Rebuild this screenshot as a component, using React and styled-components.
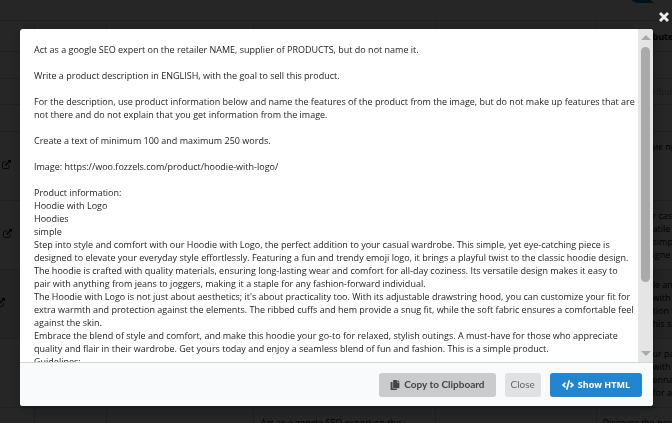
import React, { useState } from 'react';
import styled, { createGlobalStyle } from 'styled-components';
import { FaCode, FaCopy } from 'react-icons/fa';

const prompt = `Act as a google SEO expert on the retailer NAME, supplier of PRODUCTS, but do not name it.

Write a product description in ENGLISH, with the goal to sell this product.

For the description, use product information below and name the features of the product from the image, but do not make up features that are not there and do not explain that you get information from the image.

Create a text of minimum 100 and maximum 250 words.

Image: https://woo.fozzels.com/product/hoodie-with-logo/

Product information:
Hoodie with Logo
Hoodies
simple
Step into style and comfort with our Hoodie with Logo, the perfect addition to your casual wardrobe. This simple, yet eye-catching piece is designed to elevate your everyday style effortlessly. Featuring a fun and trendy emoji logo, it brings a playful twist to the classic hoodie design.
The hoodie is crafted with quality materials, ensuring long-lasting wear and comfort for all-day coziness. Its versatile design makes it easy to pair with anything from jeans to joggers, making it a staple for any fashion-forward individual.
The Hoodie with Logo is not just about aesthetics; it's about practicality too. With its adjustable drawstring hood, you can customize your fit for extra warmth and protection against the elements. The ribbed cuffs and hem provide a snug fit, while the soft fabric ensures a comfortable feel against the skin.
Embrace the blend of style and comfort, and make this hoodie your go-to for relaxed, stylish outings. A must-have for those who appreciate quality and flair in their wardrobe. Get yours today and enjoy a seamless blend of fun and fashion. This is a simple product.
Guidelines:`;

const rows = [
	{ link: 2, text: 'ик пр' },
	{ link: 3, text: 'r cas\natile\nsimp\nigne' },
	{ link: -4, shade: true, text: 'le an\nwith\ntion t\nhis si' },
	{ text: 'ur pa\nwith c\nenna\nfor a' },
	{ wide: true, prompt: 'Act as a google SEO expert on the', text: 'Discover the perf' },
];

function LinkIcon() {
	return (
		<svg width="9" height="9" viewBox="0 0 18 18" fill="none" stroke="currentColor">
			<path d="M9 4H3a2 2 0 0 0-2 2v9a2 2 0 0 0 2 2h9a2 2 0 0 0 2-2v-5" strokeWidth="1.6" />
			<path d="M7 11l8-8" strokeWidth="2.2" />
			<path d="M11 0h7v7z" fill="currentColor" stroke="none" />
		</svg>
	);
}

function CrossIcon() {
	return (
		<svg width="10" height="10" viewBox="0 0 10 10" stroke="currentColor" strokeWidth="2.8">
			<path d="M1 1l8 8M9 1L1 9" />
		</svg>
	);
}

function PromptModal() {
	const [scrolled, setScrolled] = useState(0);

	const handleScroll = (e) => {
		const { scrollTop, scrollHeight, clientHeight } = e.target;
		setScrolled(scrollTop / Math.max(1, scrollHeight - clientHeight));
	};

	return (
		<Modal role="dialog" aria-modal="true">
			<Body>
				<Prompt tabIndex={0} onScroll={handleScroll}>
					{prompt}
				</Prompt>
				<ScrollBar aria-hidden="true">
					<Arrow $up />
					<Rail>
						<Spacer style={{ height: `${scrolled * 21}%` }} />
						<Thumb />
					</Rail>
					<Arrow />
				</ScrollBar>
			</Body>
			<Actions>
				<Button $variant="copy">
					<FaCopy />
					Copy to Clipboard
				</Button>
				<Button>Close</Button>
				<Button $variant="primary">
					<FaCode />
					Show HTML
				</Button>
			</Actions>
		</Modal>
	);
}

function App() {
	return (
		<>
			<GlobalStyle />
			<Page>
				<TopBar>
					<Toggle type="checkbox" aria-label="Enabled" defaultChecked />
				</TopBar>
				<Table>
					<colgroup>
						<col className="link" />
						<col className="id" />
						<col className="name" />
						<col className="prompt" />
						<col className="result" />
						<col className="attribute" />
					</colgroup>
					<thead>
						<Row $size="head">
							<th />
							<th />
							<th />
							<th />
							<th />
							<th>bute</th>
						</Row>
					</thead>
					<tbody>
						<Row $size="small">
							<td colSpan={6} />
						</Row>
						<Row $size="filter">
							<td colSpan={5} />
							<td>
								<Filter placeholder="ribute" aria-label="Attribute" />
							</td>
						</Row>
						<Row $size="small">
							<td colSpan={6} />
						</Row>
						{rows.map((row, i) => {
							return (
								<Row key={i} $size="tall" $shade={row.shade} $wide={row.wide}>
									<td>
										{row.link !== undefined && (
											<RowLink href="#product" aria-label="Open product" $start={row.link}>
												<LinkIcon />
											</RowLink>
										)}
									</td>
									<td />
									<td />
									<td>{row.prompt}</td>
									<td />
									<td>{row.text}</td>
								</Row>
							);
						})}
					</tbody>
				</Table>
			</Page>
			<Dimmer>
				<CloseIcon aria-label="Close dialog">
					<CrossIcon />
				</CloseIcon>
				<PromptModal />
			</Dimmer>
		</>
	);
}

export default App;

const GlobalStyle = createGlobalStyle`
	* {
		box-sizing: border-box;
	}

	body {
		margin: 0;
		background: #fff;
		color: #000;
		font-family: 'Open Sans', 'Noto Sans', sans-serif;
		font-size: 9px;
		line-height: 13px;
	}
`;

const Page = styled.main`
	height: 100vh;
	overflow: hidden;
`;

const TopBar = styled.div`
	display: flex;
	justify-content: flex-end;
	align-items: flex-end;
	height: 20px;
	padding: 0 5px 17px 0;
`;

const Toggle = styled.input`
	appearance: none;
	flex: none;
	width: 38px;
	height: 18px;
	margin: 0;
	border-radius: 9px;
	background: radial-gradient(circle at 29px 9px, #fff 9px, #0d71bb 10px);
`;

const Table = styled.table`
	width: calc(100% + 80px);
	table-layout: fixed;
	border-collapse: collapse;

	.link {
		width: 34px;
	}

	.id {
		width: 72px;
	}

	.name {
		width: 147px;
	}

	.prompt {
		width: 182px;
	}

	.result {
		width: 161px;
	}
`;

const heights = { head: 31, small: 27, filter: 26, tall: 69 };

const Row = styled.tr`
	height: ${({ $size }) => heights[$size]}px;
	background: ${({ $shade }) => ($shade ? '#eee' : 'transparent')};

	th,
	td {
		padding: 0 7px;
		border: 1px solid #d4d4d5;
		text-align: left;
		white-space: pre;
	}

	td {
		padding-top: ${({ $size }) => ($size === 'tall' ? 8 : 0)}px;
		vertical-align: ${({ $size }) => ($size === 'tall' ? 'top' : 'middle')};
	}

	th:first-child,
	td:first-child {
		padding: 0;
		border-left: 0;
		vertical-align: middle;
	}

	th:last-child,
	td:last-child {
		padding-left: ${({ $wide }) => ($wide ? 6 : 56)}px;
	}
`;

const Filter = styled.input`
	display: block;
	width: 100%;
	padding: 0;
	border: 0;
	font: inherit;

	&::placeholder {
		color: #999;
	}
`;

const RowLink = styled.a`
	display: block;
	margin-left: ${({ $start }) => $start}px;
	padding-bottom: 4px;
	color: #000;

	svg {
		display: block;
	}
`;

const Dimmer = styled.div`
	position: fixed;
	inset: 0;
	display: flex;
	flex-direction: column;
	padding: 29px 19px 17px 20px;
	background: rgba(0, 0, 0, 0.85);
`;

const CloseIcon = styled.button`
	position: absolute;
	top: 12px;
	right: 3px;
	padding: 0;
	border: 0;
	background: none;
	color: #eee;
	cursor: pointer;

	svg {
		display: block;
	}
`;

const Modal = styled.section`
	display: flex;
	flex: 1;
	flex-direction: column;
	min-height: 0;
	overflow: hidden;
	border-radius: 3px;
	background: #fff;
	box-shadow: 1px 3px 3px 0 rgba(0, 0, 0, 0.2), 1px 3px 15px 2px rgba(0, 0, 0, 0.2);
`;

const Body = styled.div`
	display: flex;
	flex: 1;
	min-height: 0;
`;

const Prompt = styled.div`
	flex: 1;
	padding: 14px 3px 14px 14px;
	overflow-y: auto;
	outline: none;
	color: #1b1c1d;
	white-space: pre-wrap;
	scrollbar-width: none;
`;

const ScrollBar = styled.div`
	display: flex;
	flex-direction: column;
	align-items: center;
	width: 15px;
	padding: 6px 0;
	background: #e5e5e5;
`;

const Arrow = styled.span`
	border: 5px solid transparent;
	border-top-width: ${({ $up }) => ($up ? 0 : 5)}px;
	border-bottom-width: ${({ $up }) => ($up ? 5 : 0)}px;
	border-${({ $up }) => ($up ? 'bottom' : 'top')}-color: #aaa;
`;

const Rail = styled.div`
	flex: 1;
	width: 9px;
	margin: 7px 0;
`;

const Spacer = styled.div``;

const Thumb = styled.div`
	height: 79%;
	border-radius: 5px;
	background: #aaa;
`;

const Actions = styled.footer`
	display: flex;
	align-items: center;
	justify-content: flex-end;
	gap: 9px;
	height: 44px;
	padding: 0 11px;
	border-top: 1px solid #d4d4d5;
	background: #f9fafb;
`;

const variants = {
	copy: { background: '#cacbcd', color: '#444' },
	primary: { background: '#2185d0', color: '#fff' },
	plain: { background: '#e0e1e2', color: '#666' },
};

const Button = styled.button`
	display: flex;
	align-items: center;
	gap: 4px;
	height: 24px;
	padding: 0 ${({ $variant }) => ($variant === 'primary' ? 12 : $variant ? 11 : 6)}px;
	border: 0;
	border-radius: 3px;
	background: ${({ $variant = 'plain' }) => variants[$variant].background};
	color: ${({ $variant = 'plain' }) => variants[$variant].color};
	font-family: ${({ $variant }) => ($variant === 'primary' ? "'Open Sans'" : 'Lato')}, sans-serif;
	font-size: ${({ $variant }) => ($variant === 'primary' ? 9 : 10)}px;
	font-weight: ${({ $variant }) => ($variant ? 700 : 400)};
	line-height: 13px;
	cursor: pointer;

	svg {
		font-size: ${({ $variant }) => ($variant === 'primary' ? 12 : 10)}px;
	}
`;
